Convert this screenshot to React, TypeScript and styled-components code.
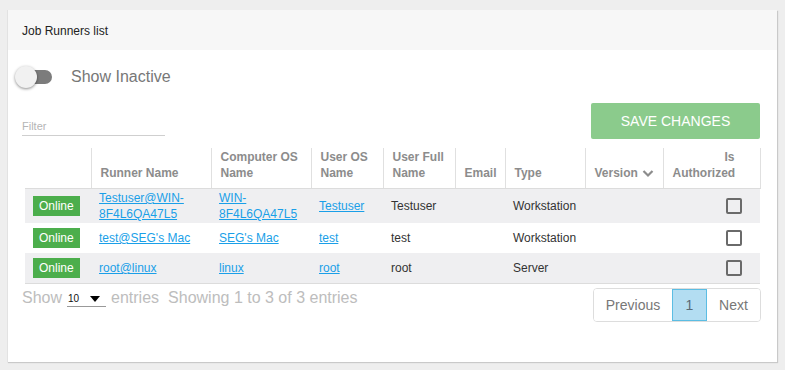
import React from "react";
import styled, { createGlobalStyle } from "styled-components";

const GlobalStyle = createGlobalStyle`
  html, body { margin: 0; padding: 0; background: #eeeeee; }
  body { font-family: "Liberation Sans", Arial, sans-serif; }
`;

const Page = styled.div`
  padding: 10px 8px 8px 7px;
  width: 785px;
  height: 370px;
  box-sizing: border-box;
`;

const Panel = styled.div`
  width: 770px;
  height: 352px;
  box-sizing: border-box;
  background: #fff;
  border-left: 1px solid #e2e2e2;
  box-shadow: 1px 1px 1px #c9c9c9;
  display: flex;
  flex-direction: column;
`;

const PanelHeader = styled.div`
  height: 40px;
  background: #f7f7f7;
  display: flex;
  align-items: center;
  padding-left: 14px;
  padding-top: 1px;
  box-sizing: border-box;
  font-size: 12px;
  color: #222;
`;

const Content = styled.div`
  padding: 0 16px 0 14px;
  display: flex;
  flex-direction: column;
`;

const ToggleRow = styled.div`
  margin-top: 16px;
  height: 22px;
  display: flex;
  align-items: center;
  gap: 19px;
`;

const Track = styled.div`
  position: relative;
  width: 30px;
  height: 14px;
  border-radius: 7px;
  background: #7c7c7c;
`;

const Knob = styled.div`
  position: absolute;
  left: -7px;
  top: -4px;
  width: 22px;
  height: 22px;
  border-radius: 50%;
  background: #f1f1f1;
  box-shadow: 0 1px 3px rgba(0, 0, 0, 0.45);
`;

const ToggleLabel = styled.span`
  font-size: 16px;
  color: #777;
`;

const ActionRow = styled.div`
  margin-top: 15px;
  display: flex;
  justify-content: space-between;
  align-items: flex-end;
`;

const FilterBox = styled.div`
  width: 143px;
  border-bottom: 1px solid #cfcfcf;
  font-size: 11px;
  color: #b5b5b5;
  padding-bottom: 3px;
  margin-bottom: 3px;
`;

const SaveButton = styled.button`
  width: 169px;
  height: 36px;
  margin-right: 1px;
  border: none;
  border-radius: 2px;
  background: #8bcb8c;
  color: #fff;
  font-family: "Liberation Sans", Arial, sans-serif;
  font-size: 14px;
  padding: 0;
`;

const Table = styled.table`
  margin-top: 9px;
  margin-left: 3px;
  width: 735px;
  table-layout: fixed;
  border-collapse: collapse;
  font-size: 12px;
`;

const Th = styled.th<{ $first?: boolean; $last?: boolean; $right?: boolean }>`
  vertical-align: bottom;
  text-align: ${(p) => (p.$right ? "right" : "left")};
  font-weight: bold;
  color: #8c8c8c;
  line-height: 16px;
  padding: 1px ${(p) => (p.$right ? "25px" : "8px")} 7px 9px;
  border-left: ${(p) => (p.$first ? "none" : "1px solid #e0e0e0")};
  border-right: ${(p) => (p.$last ? "1px solid #e0e0e0" : "none")};
  border-bottom: 1px solid #dcdcdc;
  white-space: normal;
`;

const SortIcon = styled.svg`
  vertical-align: -1px;
  margin-left: 4px;
`;

const Tr = styled.tr<{ $shade?: boolean }>`
  background: ${(p) => (p.$shade ? "#efeff1" : "#fff")};
`;

const Td = styled.td<{ $right?: boolean; $badge?: boolean }>`
  color: #333;
  line-height: 16px;
  vertical-align: middle;
  text-align: ${(p) => (p.$right ? "right" : "left")};
  padding: ${(p) => (p.$badge ? "5px 8px" : "1px 8px")};
  padding-right: ${(p) => (p.$right ? "18px" : "8px")};
  word-wrap: break-word;
`;

const Body = styled.tbody`
  border-bottom: 1px solid #dcdcdc;
`;

const Badge = styled.span`
  display: inline-block;
  height: 20px;
  line-height: 20px;
  padding: 0 6px;
  background: #4cae4c;
  color: #fff;
  font-size: 12px;
`;

const Link = styled.a`
  color: #1a9fe8;
  text-decoration: underline;
  cursor: pointer;
`;

const Checkbox = styled.span`
  display: inline-block;
  width: 12px;
  height: 12px;
  border: 2px solid #6a6a6a;
  border-radius: 2px;
  vertical-align: middle;
`;

const Footer = styled.div`
  margin-top: 4px;
  display: flex;
  justify-content: space-between;
  align-items: flex-start;
`;

const Info = styled.div`
  display: flex;
  align-items: center;
  font-size: 16px;
  color: #bdbdbd;
  line-height: 18px;
  gap: 5px;
`;

const Select = styled.span`
  display: inline-flex;
  align-items: center;
  justify-content: space-between;
  width: 39px;
  box-sizing: border-box;
  padding: 0 6px 0 1px;
  border-bottom: 1px solid #999;
  font-size: 10px;
  color: #111;
  line-height: 14px;
  margin-top: 4px;
`;

const Caret = styled.svg`
  display: block;
`;

const ShowingText = styled.span`
  margin-left: 4px;
`;

const Pager = styled.div`
  display: flex;
  border: 1px solid #dddddd;
  border-radius: 4px;
  overflow: hidden;
  font-size: 14px;
`;

const PageBtn = styled.span<{ $active?: boolean; $w: number }>`
  width: ${(p) => p.$w}px;
  height: 32px;
  display: flex;
  align-items: center;
  justify-content: center;
  color: ${(p) => (p.$active ? "#5a6a75" : "#777")};
  background: ${(p) => (p.$active ? "#b3ddf2" : "#fff")};
  box-shadow: ${(p) => (p.$active ? "inset 0 0 0 1px #5bbde3" : "none")};
`;

type Row = {
  runner: string;
  computer: string;
  user: string;
  full: string;
  type: string;
};

const rows: Row[] = [
  { runner: "Testuser@WIN-8F4L6QA47L5", computer: "WIN-8F4L6QA47L5", user: "Testuser", full: "Testuser", type: "Workstation" },
  { runner: "test@SEG's Mac", computer: "SEG's Mac", user: "test", full: "test", type: "Workstation" },
  { runner: "root@linux", computer: "linux", user: "root", full: "root", type: "Server" },
];

const widths = [66, 120, 100, 72, 72, 50, 80, 78, 97];

export default function App() {
  return (
    <>
      <GlobalStyle />
      <Page>
        <Panel>
          <PanelHeader>Job Runners list</PanelHeader>
          <Content>
            <ToggleRow>
              <Track>
                <Knob />
              </Track>
              <ToggleLabel>Show Inactive</ToggleLabel>
            </ToggleRow>
            <ActionRow>
              <FilterBox>Filter</FilterBox>
              <SaveButton>SAVE CHANGES</SaveButton>
            </ActionRow>
            <Table>
              <colgroup>
                {widths.map((w, i) => (
                  <col key={i} style={{ width: w }} />
                ))}
              </colgroup>
              <thead>
                <tr>
                  <Th $first />
                  <Th>Runner Name</Th>
                  <Th>Computer OS Name</Th>
                  <Th>User OS Name</Th>
                  <Th>User Full Name</Th>
                  <Th>Email</Th>
                  <Th>Type</Th>
                  <Th>
                    Version
                    <SortIcon width="12" height="9" viewBox="0 0 12 9">
                      <path d="M1.5 2 L6 6.5 L10.5 2" fill="none" stroke="#8c8c8c" strokeWidth="2.2" />
                    </SortIcon>
                  </Th>
                  <Th $last $right>
                    Is Authorized
                  </Th>
                </tr>
              </thead>
              <Body>
                {rows.map((r, i) => (
                  <Tr key={i} $shade={i % 2 === 0}>
                    <Td $badge>
                      <Badge>Online</Badge>
                    </Td>
                    <Td>
                      <Link>{r.runner.replace("WIN-", "WIN-\u200b")}</Link>
                    </Td>
                    <Td>
                      <Link>{r.computer.replace("WIN-", "WIN-\u200b")}</Link>
                    </Td>
                    <Td>
                      <Link>{r.user}</Link>
                    </Td>
                    <Td>{r.full}</Td>
                    <Td />
                    <Td>{r.type}</Td>
                    <Td />
                    <Td $right>
                      <Checkbox />
                    </Td>
                  </Tr>
                ))}
              </Body>
            </Table>
            <Footer>
              <Info>
                <span>Show</span>
                <Select>
                  10
                  <Caret width="10" height="6" viewBox="0 0 10 6">
                    <path d="M0 0 H10 L5 6 Z" fill="#000" />
                  </Caret>
                </Select>
                <span>entries</span>
                <ShowingText>Showing 1 to 3 of 3 entries</ShowingText>
              </Info>
              <Pager>
                <PageBtn $w={78}>Previous</PageBtn>
                <PageBtn $w={35} $active>
                  1
                </PageBtn>
                <PageBtn $w={53}>Next</PageBtn>
              </Pager>
            </Footer>
          </Content>
        </Panel>
      </Page>
    </>
  );
}
